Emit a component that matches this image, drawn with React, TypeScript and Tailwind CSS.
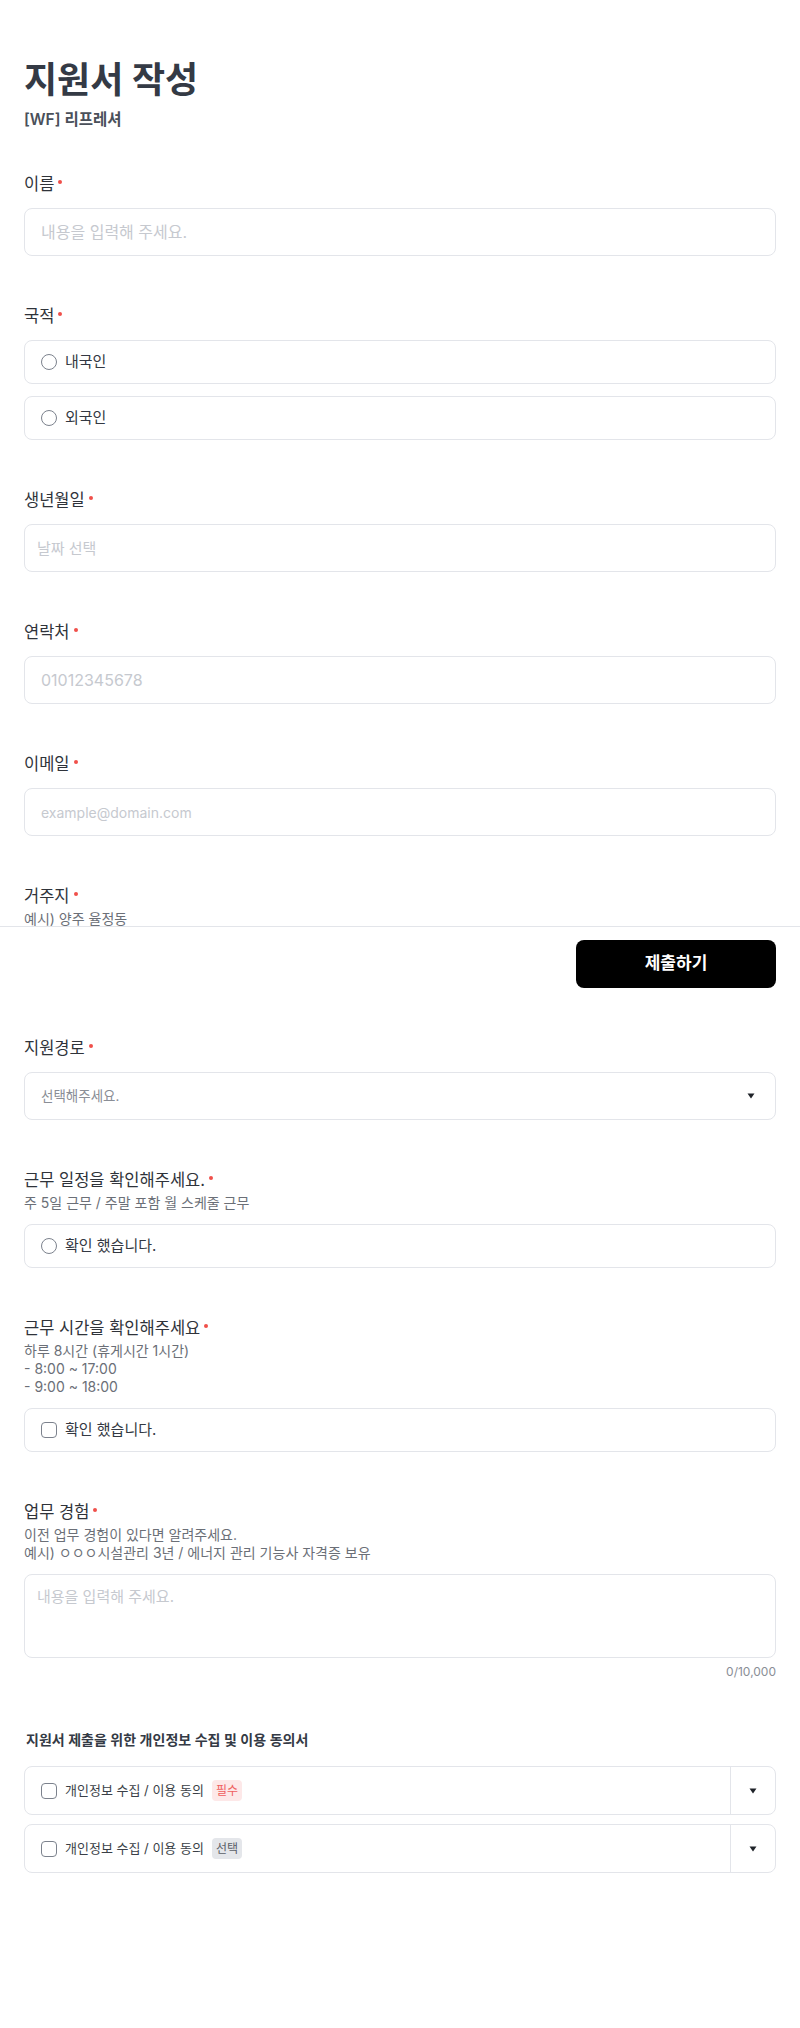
import type { ReactNode } from "react";

function Label({ children }: { children: ReactNode }) {
  return (
    <div className="flex h-6 items-center text-[16.5px] text-[#2f333a]">
      <span>{children}</span>
      <span className="ml-[4px] mb-[5px] h-[4px] w-[4px] rounded-full bg-[#f0504a]" />
    </div>
  );
}

function Helper({ lines }: { lines: string[] }) {
  return (
    <div className="mt-[2px] text-[14px] leading-[18px] text-[#6b6f77]">
      {lines.map((line) => (
        <p key={line}>{line}</p>
      ))}
    </div>
  );
}

function TextInput({ placeholder, cls = "px-4 text-[16px]" }: { placeholder: string; cls?: string }) {
  return (
    <input
      className={`mt-3 block h-12 w-full rounded-lg border border-[#e3e5ea] bg-white text-[#333842] outline-none placeholder:text-[#c6c9cf] ${cls}`}
      placeholder={placeholder}
    />
  );
}

function Radio() {
  return <span className="h-4 w-4 shrink-0 rounded-full border border-[#7c828d]" />;
}

function Check() {
  return <span className="h-4 w-4 shrink-0 rounded-[4px] border border-[#7c828d]" />;
}

function Caret() {
  return (
    <svg width="8" height="6" viewBox="0 0 8 6" className="shrink-0">
      <path d="M0.5 0.5 H7.5 L4 5.5 Z" fill="#1f2329" />
    </svg>
  );
}

function OptionBox({ icon, text }: { icon: ReactNode; text: string }) {
  return (
    <div className="flex h-11 items-center gap-[8px] rounded-lg border border-[#e3e5ea] bg-white px-4 text-[15px] text-[#333842]">
      {icon}
      <span>{text}</span>
    </div>
  );
}

function Agreement({ required }: { required: boolean }) {
  return (
    <div className="flex h-[49px] rounded-lg border border-[#e3e5ea] bg-white">
      <div className="flex flex-1 items-center px-4 text-[13px] text-[#3a3f47]">
        <Check />
        <span className="ml-[8px]">개인정보 수집 / 이용 동의</span>
        {required ? (
          <span className="ml-2 rounded bg-[#fde8e8] px-1 py-[2px] text-[12px] leading-[17px] text-[#ef5f5f]">필수</span>
        ) : (
          <span className="ml-2 rounded bg-[#e4e6ea] px-1 py-[2px] text-[12px] leading-[17px] text-[#5b6068]">선택</span>
        )}
      </div>
      <div className="flex w-[45px] items-center justify-center border-l border-[#e3e5ea]">
        <Caret />
      </div>
    </div>
  );
}

export default function App() {
  return (
    <div className="relative min-h-[2028px] bg-white font-['Inter','Noto_Sans_CJK_KR',sans-serif]">
      <main className="px-6 pt-[58px]">
        <h1 className="text-[36px] font-bold leading-[44px] text-[#343a45]">지원서 작성</h1>
        <p className="mt-[6px] text-[15.5px] font-semibold leading-6 text-[#4a505a]">[WF] 리프레셔</p>

        <form className="mt-10 flex flex-col gap-12">
          <section>
            <Label>이름</Label>
            <TextInput placeholder="내용을 입력해 주세요." />
          </section>

          <section>
            <Label>국적</Label>
            <div className="mt-3 flex flex-col gap-3">
              <OptionBox icon={<Radio />} text="내국인" />
              <OptionBox icon={<Radio />} text="외국인" />
            </div>
          </section>

          <section>
            <Label>생년월일</Label>
            <TextInput placeholder="날짜 선택" cls="px-3 text-[15px]" />
          </section>

          <section>
            <Label>연락처</Label>
            <TextInput placeholder="01012345678" />
          </section>

          <section>
            <Label>이메일</Label>
            <TextInput placeholder="example@domain.com" cls="px-4 text-[14px]" />
          </section>

          <section>
            <Label>거주지</Label>
            <Helper lines={["예시) 양주 율정동"]} />
            <TextInput placeholder="내용을 입력해 주세요." />
          </section>

          <section>
            <Label>지원경로</Label>
            <div className="mt-3 flex h-12 items-center justify-between rounded-lg border border-[#e3e5ea] pl-4 pr-5 text-[13.5px] text-[#8a8e96]">
              <span>선택해주세요.</span>
              <Caret />
            </div>
          </section>

          <section>
            <Label>근무 일정을 확인해주세요.</Label>
            <Helper lines={["주 5일 근무 / 주말 포함 월 스케줄 근무"]} />
            <div className="mt-3">
              <OptionBox icon={<Radio />} text="확인 했습니다." />
            </div>
          </section>

          <section>
            <Label>근무 시간을 확인해주세요</Label>
            <Helper lines={["하루 8시간 (휴게시간 1시간)", "- 8:00 ~ 17:00", "- 9:00 ~ 18:00"]} />
            <div className="mt-3">
              <OptionBox icon={<Check />} text="확인 했습니다." />
            </div>
          </section>

          <section>
            <Label>업무 경험</Label>
            <Helper lines={["이전 업무 경험이 있다면 알려주세요.", "예시) ㅇㅇㅇ시설관리 3년 / 에너지 관리 기능사 자격증 보유"]} />
            <textarea
              className="mt-3 block h-[84px] w-full resize-none rounded-lg border border-[#e3e5ea] px-3 pt-3 text-[15px] leading-5 text-[#333842] outline-none placeholder:text-[#c6c9cf]"
              placeholder="내용을 입력해 주세요."
            />
            <p className="mt-1 text-right text-[12px] leading-5 text-[#8a8e96]">0/10,000</p>
          </section>

          <section>
            <h2 className="px-[2px] text-[14px] font-semibold leading-5 text-[#343a45]">지원서 제출을 위한 개인정보 수집 및 이용 동의서</h2>
            <div className="mt-4 flex flex-col gap-[9px]">
              <Agreement required />
              <Agreement required={false} />
            </div>
          </section>
        </form>
      </main>

      <div className="absolute left-0 right-0 top-[926px] flex justify-end border-t border-[#e3e5ea] bg-white px-6 pb-3 pt-[13px]">
        <button className="h-12 w-[200px] rounded-lg bg-black text-[17px] font-bold text-white">제출하기</button>
      </div>
    </div>
  );
}
